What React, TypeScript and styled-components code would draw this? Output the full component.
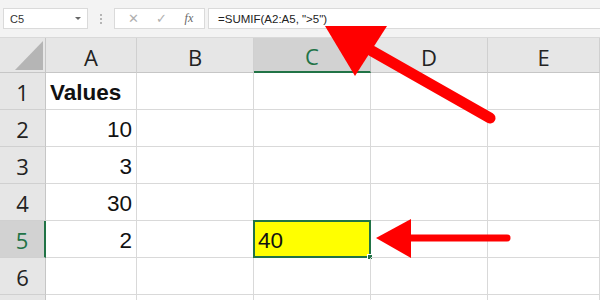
import { FC, Fragment } from 'react'
import styled, { createGlobalStyle } from 'styled-components'

const GlobalStyle = createGlobalStyle`
html, body { margin: 0; padding: 0; background: #fff; }
* { box-sizing: border-box; }
`

const green = '#217346'

const Sheet = styled.div`
position: relative;
width: 600px;
height: 300px;
overflow: hidden;
background: #fff;
font-family: "Liberation Sans", Arial, sans-serif;
`

const Toolbar = styled.div`
height: 38px;
background: #f3f3f3;
border-bottom: 1px solid #d9d9d9;
display: flex;
align-items: center;
padding-left: 3px;
`

const NameBox = styled.div`
width: 85px;
height: 21px;
background: #fff;
border: 1px solid #dadada;
display: flex;
align-items: center;
justify-content: space-between;
padding: 0 6px 0 6px;
font-size: 11px;
color: #333;
`

const Caret = styled.span`
width: 0;
height: 0;
border-left: 3px solid transparent;
border-right: 3px solid transparent;
border-top: 3px solid #666;
`

const Dots = styled.div`
width: 26px;
display: flex;
flex-direction: column;
align-items: center;
gap: 2px;
span {
  width: 2px;
  height: 2px;
  background: #b5b5b5;
}
`

const FxBox = styled.div`
width: 91px;
height: 21px;
background: #fff;
border: 1px solid #dadada;
display: flex;
align-items: center;
justify-content: space-around;
padding: 0 2px 0 4px;
color: #b0b0b0;
font-size: 13px;
`

const Fx = styled.span`
font-family: "Liberation Serif", serif;
font-style: italic;
color: #666;
font-size: 12px;
`

const FormulaInput = styled.div`
flex: 1;
margin-left: 3px;
height: 21px;
background: #fff;
border: 1px solid #dadada;
border-right: none;
display: flex;
align-items: center;
padding-left: 9px;
font-size: 11.5px;
color: #222;
`

const Grid = styled.div`
display: grid;
grid-template-columns: 46px 91px 117px 117px 117px 112px;
grid-template-rows: 35px repeat(7, 37px);
`

const Corner = styled.div`
background: #e6e6e6;
border-right: 1px solid #c6c6c6;
border-bottom: 1px solid #c6c6c6;
display: flex;
align-items: flex-end;
justify-content: flex-end;
padding: 0 2px 2px 0;
`

const ColHeader = styled.div<{ $selected?: boolean }>`
background: ${p => (p.$selected ? '#d2d2d2' : '#e6e6e6')};
color: ${p => (p.$selected ? green : '#222')};
border-right: 1px solid ${p => (p.$selected ? '#bdbdbd' : '#d0d0d0')};
border-bottom: ${p => (p.$selected ? `2px solid ${green}` : '1px solid #c6c6c6')};
font-family: "Open Sans", sans-serif;
font-size: 22px;
display: flex;
align-items: center;
justify-content: center;
padding-top: 3px;
`

const RowHeader = styled.div<{ $selected?: boolean }>`
background: ${p => (p.$selected ? '#d2d2d2' : '#e6e6e6')};
color: ${p => (p.$selected ? green : '#222')};
border-right: ${p => (p.$selected ? `2px solid ${green}` : '1px solid #c6c6c6')};
border-bottom: 1px solid #d0d0d0;
font-family: "Open Sans", sans-serif;
font-size: 22px;
display: flex;
align-items: center;
justify-content: center;
padding-top: 2px;
`

const Cell = styled.div<{ $right?: boolean; $bold?: boolean; $active?: boolean }>`
position: relative;
border-right: 1px solid #d9d9d9;
border-bottom: 1px solid #d9d9d9;
display: flex;
align-items: center;
justify-content: ${p => (p.$right ? 'flex-end' : 'flex-start')};
padding: 4px 4px 0 4px;
font-size: 22.5px;
font-weight: ${p => (p.$bold ? 700 : 400)};
color: #111;
${p =>
  p.$active &&
  `
  background: #ffff00;
  border: 2px solid ${green};
  margin: -1px 0 0 -1px;
  padding-left: 3px;
`}
`

const FillHandle = styled.span`
position: absolute;
right: -4px;
bottom: -4px;
width: 6px;
height: 6px;
background: ${green};
border: 1px solid #fff;
`

const Overlay = styled.svg`
position: absolute;
left: 0;
top: 0;
pointer-events: none;
`

const columns = ['A', 'B', 'C', 'D', 'E']
const values: Record<number, { a?: string; bold?: boolean }> = {
  1: { a: 'Values', bold: true },
  2: { a: '10' },
  3: { a: '3' },
  4: { a: '30' },
  5: { a: '2' },
  6: {},
  7: {},
}

const App: FC = () => {
  return (
    <Sheet>
      <GlobalStyle />
      <Toolbar>
        <NameBox>
          C5
          <Caret />
        </NameBox>
        <Dots>
          <span />
          <span />
          <span />
        </Dots>
        <FxBox>
          <span>✕</span>
          <span>✓</span>
          <Fx>fx</Fx>
        </FxBox>
        <FormulaInput>=SUMIF(A2:A5, "&gt;5")</FormulaInput>
      </Toolbar>
      <Grid>
        <Corner>
          <svg width="28" height="29" viewBox="0 0 28 29">
            <polygon points="0,29 28,0 28,29" fill="#b5b5b5" />
          </svg>
        </Corner>
        {columns.map(c => (
          <ColHeader key={c} $selected={c === 'C'}>
            {c}
          </ColHeader>
        ))}
        {[1, 2, 3, 4, 5, 6, 7].map(r => (
          <Fragment key={r}>
            <RowHeader $selected={r === 5}>{r < 7 ? r : ''}</RowHeader>
            <Cell $right={!values[r].bold} $bold={values[r].bold}>
              {values[r].a}
            </Cell>
            <Cell />
            {r === 5 ? (
              <Cell $active>
                40
                <FillHandle />
              </Cell>
            ) : (
              <Cell />
            )}
            <Cell />
            <Cell />
          </Fragment>
        ))}
      </Grid>
      <Overlay width="600" height="300" viewBox="0 0 600 300">
        <line x1="490" y1="118" x2="372" y2="51" stroke="#ff0000" strokeWidth="11" strokeLinecap="round" />
        <polygon points="325,26 387,26 355,76" fill="#ff0000" />
        <line x1="408" y1="238" x2="507" y2="238" stroke="#ff0000" strokeWidth="7" strokeLinecap="round" />
        <polygon points="376,238 411,219 411,258" fill="#ff0000" />
      </Overlay>
    </Sheet>
  )
}

export default App
